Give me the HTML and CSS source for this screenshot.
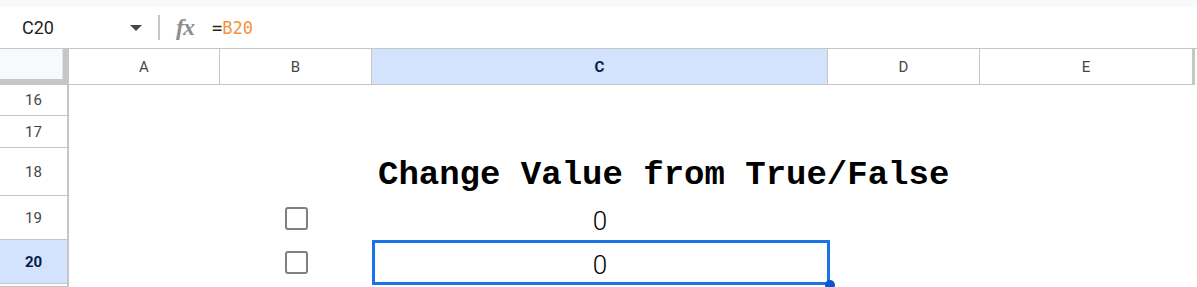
FILE: index.html
```html
<html>
<head>
  <title>Sheet - C20</title>
  <link rel="stylesheet" href="styles.css">
</head>
<body>
  <div class="top-strip"></div>
  <div class="formula-bar">
    <div class="name-box">
      <span class="cell-name">C20</span>
      <span class="name-arrow"></span>
    </div>
    <div class="bar-divider"></div>
    <span class="fx-icon">fx</span>
    <span class="formula"><span class="eq">=</span><span class="ref">B20</span></span>
  </div>

  <div class="sheet">
    <div class="row col-headers">
      <div class="corner"></div>
      <div class="col-head">A</div>
      <div class="col-head">B</div>
      <div class="col-head selected">C</div>
      <div class="col-head">D</div>
      <div class="col-head last">E</div>
    </div>

    <div class="row r16">
      <div class="row-head">16</div>
      <div class="cell"></div><div class="cell"></div><div class="cell"></div><div class="cell"></div><div class="cell"></div>
    </div>
    <div class="row r17">
      <div class="row-head">17</div>
      <div class="cell"></div><div class="cell"></div><div class="cell"></div><div class="cell"></div><div class="cell"></div>
    </div>
    <div class="row r18">
      <div class="row-head">18</div>
      <div class="cell"></div>
      <div class="cell"></div>
      <div class="cell title-cell"><span class="title">Change Value from True/False</span></div>
      <div class="cell"></div>
      <div class="cell"></div>
    </div>
    <div class="row r19">
      <div class="row-head">19</div>
      <div class="cell"></div>
      <div class="cell check-cell"><span class="checkbox"></span></div>
      <div class="cell value-cell">0</div>
      <div class="cell"></div>
      <div class="cell"></div>
    </div>
    <div class="row r20">
      <div class="row-head selected">20</div>
      <div class="cell"></div>
      <div class="cell check-cell"><span class="checkbox"></span></div>
      <div class="cell value-cell active">0</div>
      <div class="cell"></div>
      <div class="cell"></div>
    </div>
    <!-- proxima linha, quase toda fora da tela -->
    <div class="row r21">
      <div class="row-head"></div>
      <div class="cell"></div><div class="cell"></div><div class="cell"></div><div class="cell"></div><div class="cell"></div>
    </div>
  </div>
</body>
</html>
```

FILE: styles.css
```css
html, body {
  margin: 0;
  padding: 0;
  height: 287px;
  overflow: hidden;
  background-color: #ffffff;
  font-family: Roboto, "Liberation Sans", Arial, sans-serif;
}

* {
  box-sizing: border-box;
}

.top-strip {
  height: 7px;
  background-color: #f8f9fa;
}

/* barra de formula */
.formula-bar {
  height: 42px;
  display: flex;
  align-items: center;
  border-bottom: 1px solid #c4c7c5;
}

.name-box {
  width: 150px;
  padding-left: 22px;
  padding-right: 8px;
  display: flex;
  align-items: center;
  justify-content: space-between;
}

.cell-name {
  font-size: 18px;
  color: #1f1f1f;
}

.name-arrow {
  width: 0;
  height: 0;
  border-left: 6.5px solid transparent;
  border-right: 6.5px solid transparent;
  border-top: 6px solid #444746;
}

.bar-divider {
  width: 2px;
  height: 25px;
  margin-left: 8px;
  background-color: #c7c7c7;
}

.fx-icon {
  margin-left: 16px;
  width: 22px;
  font-family: "Liberation Serif", serif;
  font-style: italic;
  font-weight: bold;
  font-size: 24px;
  color: #8e8e8e;
  letter-spacing: -1px;
}

.formula {
  margin-left: 14px;
  font-family: "DejaVu Sans Mono", "Liberation Mono", monospace;
  font-size: 17px;
}

.formula .eq {
  color: #1f1f1f;
}

.formula .ref {
  color: #f4933a;
}

/* planilha */
.row {
  display: grid;
  grid-template-columns: 69px 151px 152px 456px 152px 215px;
}

.col-headers {
  height: 36px;
}

.corner {
  background-color: #f8f9fa;
  border-right: 6px solid #c4c7c5;
  border-bottom: 6px solid #c4c7c5;
  box-shadow: inset -1px 0 0 #e3e3e3;
}

.col-head {
  display: flex;
  align-items: center;
  justify-content: center;
  font-size: 15px;
  color: #444746;
  border-right: 1px solid #c4c7c5;
  border-bottom: 1px solid #c4c7c5;
}

.col-head.selected {
  background-color: #d3e3fd;
  color: #041e49;
  font-weight: bold;
}

.col-head.last {
  border-right: 3px solid #c4c7c5;
}

.row-head {
  display: flex;
  align-items: center;
  justify-content: center;
  font-size: 15px;
  color: #444746;
  border-right: 2px solid #c4c7c5;
  border-bottom: 1px solid #c4c7c5;
}

.row-head.selected {
  background-color: #d3e3fd;
  color: #041e49;
  font-weight: bold;
}

.r16 { height: 31px; }
.r17 { height: 32px; }
.r18 { height: 48px; }
.r19 { height: 44px; }
.r20 { height: 44px; }
.r21 { height: 3px; }

.cell {
  position: relative;
}

.title-cell {
  display: flex;
  align-items: flex-end;
  padding-left: 6px;
  padding-bottom: 4px;
  overflow: visible;
  white-space: nowrap;
  z-index: 1;
}

.title {
  font-family: "Liberation Mono", "Courier New", monospace;
  font-weight: bold;
  font-size: 34px;
  line-height: 34px;
  color: #000000;
}

.check-cell {
  display: flex;
  align-items: center;
  justify-content: center;
}

.checkbox {
  width: 23px;
  height: 23px;
  border: 2px solid #808080;
  border-radius: 3px;
  margin-left: 1px;
  background-color: #ffffff;
}

.value-cell {
  display: flex;
  align-items: flex-end;
  justify-content: center;
  padding-bottom: 6px;
  font-family: Roboto, sans-serif;
  font-weight: 300;
  font-size: 26px;
  line-height: 26px;
  color: #000000;
}

/* celula ativa */
.value-cell.active::after {
  content: "";
  position: absolute;
  top: 0;
  left: 0;
  right: -2px;
  bottom: -1px;
  border: 3px solid #1a73e8;
}

.value-cell.active::before {
  content: "";
  position: absolute;
  right: -7px;
  bottom: -6px;
  width: 10px;
  height: 10px;
  border-radius: 50%;
  background-color: #0b57d0;
  z-index: 2;
}
```
